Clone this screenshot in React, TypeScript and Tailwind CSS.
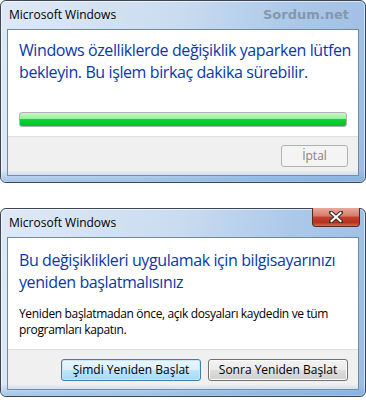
const font = "font-['Segoe_UI','Open_Sans','Noto_Sans',sans-serif]";

function Frame({ title, children, watermark, close }: { title: string; children: React.ReactNode; watermark?: boolean; close?: boolean }) {
  return (
    <div className="relative flex flex-col rounded-[6px] border border-[#3a4656] bg-[linear-gradient(100deg,#dfe9f5_0%,#cadcf0_45%,#abc8e9_75%,#9dbde4_100%)] shadow-[inset_0_0_0_1px_rgba(255,255,255,0.6)]">
      <div className="flex h-[28px] items-center justify-between pl-[8px] pr-[16px]">
        <span className="text-[12px] text-black">{title}</span>
        {watermark && (
          <span className="font-['DejaVu_Sans',sans-serif] text-[13px] font-bold text-[#8597ac]">Sordum.net</span>
        )}
      </div>
      {close && (
        <div className="absolute right-[5px] top-[-1px] flex h-[19px] w-[48px] items-center justify-center rounded-b-[4px] border border-t-0 border-[#5a2a22] bg-[linear-gradient(180deg,#e9a99b_0%,#d47a68_45%,#c2432f_50%,#b7321f_80%,#d66a4c_100%)]">
          <svg width="14" height="12" viewBox="0 0 14 12">
            <path d="M2 1.5 L12 10.5 M12 1.5 L2 10.5" stroke="#3b2a2a" strokeWidth="4" strokeLinecap="square" />
            <path d="M2.5 2 L11.5 10 M11.5 2 L2.5 10" stroke="#ffffff" strokeWidth="2" strokeLinecap="square" />
          </svg>
        </div>
      )}
      <div className="mx-[6px] mb-[6px] border border-[#6f88a8] bg-white">{children}</div>
      <div className="pointer-events-none absolute inset-x-0 bottom-0 h-[12px] rounded-b-[6px] bg-[linear-gradient(180deg,rgba(110,165,220,0)_0%,rgba(110,165,220,0.55)_100%)]" />
    </div>
  );
}

function Button({ children, primary, disabled, className }: { children: React.ReactNode; primary?: boolean; disabled?: boolean; className?: string }) {
  const base = "flex h-[22px] items-center justify-center rounded-[3px] border text-[12px]";
  if (disabled)
    return <div className={`${base} border-[#adb2b5] bg-[#f4f4f4] text-[#838383] ${className}`}>{children}</div>;
  return (
    <div
      className={`${base} ${
        primary
          ? "border-[#3c7fb1] bg-[linear-gradient(180deg,#eaf6fd_0%,#d9f0fc_50%,#bee6fd_50%,#a7d9f5_100%)] shadow-[inset_0_0_0_1px_#c8e6f8]"
          : "border-[#707070] bg-[linear-gradient(180deg,#f2f2f2_0%,#ebebeb_50%,#dddddd_50%,#cfcfcf_100%)] shadow-[inset_0_0_0_1px_#fcfcfc]"
      } text-black ${className}`}
    >
      {children}
    </div>
  );
}

export default function App() {
  return (
    <div className={`flex h-[400px] w-[366px] flex-col gap-[25px] bg-white ${font}`}>
      <Frame title="Microsoft Windows" watermark>
        <div className="px-[11px] pt-[9px] pb-[9px]">
          <p className="whitespace-nowrap text-[16px] leading-[22px] tracking-[-0.4px] text-[#0a37b0]">
            Windows özelliklerde değişiklik yaparken lütfen
            <br />
            bekleyin. Bu işlem birkaç dakika sürebilir.
          </p>
          <div className="mt-[29px] h-[15px] rounded-[3px] border border-[#b2b2b2] bg-[linear-gradient(180deg,#c9f7c9_0%,#9aee9a_45%,#0bd33a_50%,#00c830_85%,#19b43a_100%)]" />
        </div>
        <div className="flex h-[39px] items-center justify-end border-t border-[#dfdfdf] bg-[#f0f0f0] pr-[10px]">
          <Button disabled className="w-[67px]">İptal</Button>
        </div>
      </Frame>

      <Frame title="Microsoft Windows" close>
        <div className="px-[11px] pt-[11px] pb-[11px]">
          <p className="whitespace-nowrap text-[16px] leading-[22px] tracking-[-0.4px] text-[#0a37b0]">
            Bu değişiklikleri uygulamak için bilgisayarınızı
            <br />
            yeniden başlatmalısınız
          </p>
          <p className="mt-[13px] whitespace-nowrap text-[12px] leading-[16px] tracking-[-0.35px] text-black">
            Yeniden başlatmadan önce, açık dosyaları kaydedin ve tüm
            <br />
            programları kapatın.
          </p>
        </div>
        <div className="flex h-[40px] items-center justify-end gap-[7px] border-t border-[#dfdfdf] bg-[#f0f0f0] pr-[10px]">
          <Button primary className="w-[140px]">Şimdi Yeniden Başlat</Button>
          <Button className="w-[140px]">Sonra Yeniden Başlat</Button>
        </div>
      </Frame>
    </div>
  );
}
